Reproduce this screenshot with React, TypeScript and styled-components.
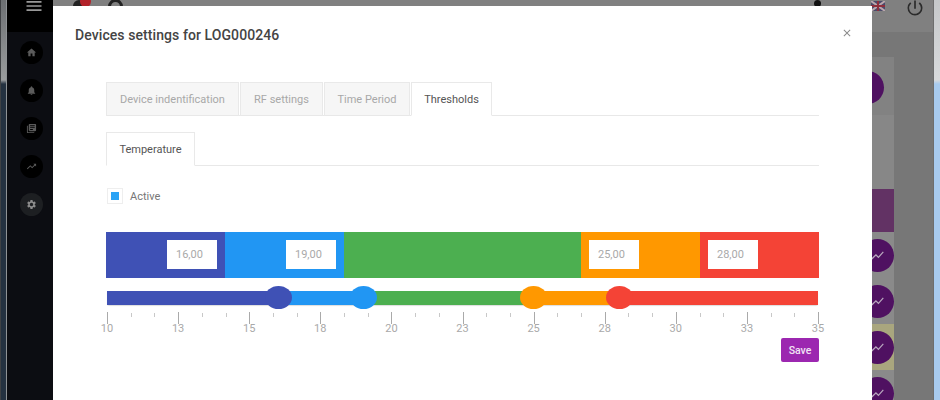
import React from "react";
import styled, { createGlobalStyle } from "styled-components";
import { MdHome, MdNotifications, MdLibraryBooks, MdSettings, MdTrendingUp, MdMenu, MdPowerSettingsNew, MdShowChart, MdClose } from "react-icons/md";

const Global = createGlobalStyle`
  html, body { margin: 0; padding: 0; width: 940px; height: 400px; overflow: hidden; background: #7f7f7f; }
  body { font-family: Roboto, "Liberation Sans", sans-serif; }
  * { box-sizing: border-box; }
`;

const Page = styled.div`
  position: relative;
  display: flex;
  width: 940px;
  height: 400px;
  overflow: hidden;
  background: #777;
`;
const WinEdgeLeft = styled.div`
  width: 7px;
  flex: none;
  background: linear-gradient(to bottom, #6c6f72 0, #9a9c9e 80px, #243140 84px, #243140 100%);
  border-left: 1px solid #3f4144;
  border-right: 1px solid #8f9295;
`;
const WinEdgeRight = styled.div`
  width: 7px;
  flex: none;
  background: linear-gradient(to bottom, #c6c8ca 0, #d8dadc 80px, #a8cbef 84px, #a8cbef 100%);
  border-left: 1px solid #6e6e6e;
`;
const Sidebar = styled.aside`
  width: 46px;
  flex: none;
  display: flex;
  flex-direction: column;
  background: #0c0d12;
`;
const Burger = styled.div`
  height: 32px;
  background: #000;
  color: #999;
  display: flex;
  justify-content: center;
  font-size: 20px;
  line-height: 0;
  padding-left: 7px;
  svg { margin-top: -4px; }
`;
const NavList = styled.nav`
  display: flex;
  flex-direction: column;
  gap: 15px;
  align-items: center;
  padding: 9px 0 0 3px;
`;
const NavDot = styled.span<{ $active?: boolean }>`
  width: 23px;
  height: 23px;
  border-radius: 50%;
  display: flex;
  align-items: center;
  justify-content: center;
  background: ${(p) => (p.$active ? "#1d1f22" : "#000")};
  color: ${(p) => (p.$active ? "#8c8c8c" : "#5b5b5b")};
  font-size: 11px;
`;
const Main = styled.div`
  flex: 1;
  display: flex;
  flex-direction: column;
`;
const TopBar = styled.div`
  height: 32px;
  background: #808080;
  flex: none;
`;
const Content = styled.div`
  flex: 1;
  display: flex;
  justify-content: flex-end;
  padding: 25px 39px 0 0;
`;
const RightCol = styled.div`
  width: 60px;
  display: flex;
  flex-direction: column;
  align-items: flex-end;
`;
const TopCell = styled.div`
  width: 60px;
  height: 58px;
  background: #828282;
  display: flex;
  justify-content: flex-end;
  padding: 14px 10px 0 0;
`;
const MiddleCell = styled.div`
  width: 60px;
  height: 74px;
  background: #878787;
`;
const PurpleBar = styled.div`
  width: 60px;
  height: 43px;
  background: #623264;
`;
const RoundRow = styled.div<{ $tint?: boolean }>`
  width: 60px;
  height: 46px;
  display: flex;
  justify-content: flex-end;
  align-items: center;
  background: ${(p) => (p.$tint ? "#a9a67e" : "#8a8a8a")};
`;
const RoundBtn = styled.span`
  width: 33px;
  height: 33px;
  flex: none;
  border-radius: 50%;
  background: #4f1161;
  color: #b9a9bf;
  display: flex;
  align-items: center;
  justify-content: center;
  font-size: 15px;
`;

const Overlay = styled.div`
  position: absolute;
  left: 0;
  top: 0;
  right: 0;
  bottom: 0;
  pointer-events: none;
`;
const Peek = styled.span<{ $x: number; $w: number; $bg: string; $top?: number }>`
  position: absolute;
  left: ${(p) => p.$x}px;
  top: ${(p) => p.$top ?? -4}px;
  width: ${(p) => p.$w}px;
  height: ${(p) => p.$w}px;
  border-radius: 50%;
  background: ${(p) => p.$bg};
`;
const HelpRing = styled(Peek)`
  background: transparent;
  border: 3px solid #222;
`;
const Flag = styled.svg`
  position: absolute;
  left: 871px;
  top: 1px;
  width: 14px;
  height: 10px;
`;
const Power = styled.span`
  position: absolute;
  left: 905px;
  top: -2px;
  color: #2b2b2b;
  font-size: 20px;
  line-height: 0;
`;

const Modal = styled.section`
  position: absolute;
  left: 53px;
  top: 6px;
  width: 819px;
  height: 400px;
  background: #fff;
  padding: 0 53px;
`;
const Title = styled.h2`
  margin: 0 0 0 -31px;
  padding-top: 21px;
  font-size: 14px;
  line-height: 17px;
  font-weight: 500;
  color: #444;
  letter-spacing: 0.08px;
`;
const Close = styled.span`
  position: absolute;
  right: 19px;
  top: 21px;
  color: #8a8a8a;
  font-size: 12px;
  line-height: 0;
`;
const TabRow = styled.div<{ $mt: number }>`
  display: flex;
  gap: 1px;
  margin-top: ${(p) => p.$mt}px;
  height: 34px;
  border-bottom: 1px solid #e8e8e8;
`;
const Tab = styled.div<{ $active?: boolean; $w: number }>`
  width: ${(p) => p.$w}px;
  height: 34px;
  display: flex;
  align-items: center;
  justify-content: center;
  font-size: 11px;
  white-space: nowrap;
  border: 1px solid #e9e9e9;
  background: ${(p) => (p.$active ? "#fff" : "#f6f6f6")};
  color: ${(p) => (p.$active ? "#555" : "#a8a8a8")};
  border-bottom-color: ${(p) => (p.$active ? "#fff" : "#e8e8e8")};
`;
const CheckRow = styled.label`
  display: flex;
  align-items: center;
  gap: 7px;
  margin: 22px 0 0 1px;
  height: 16px;
  font-size: 11px;
  color: #777;
`;
const Check = styled.span`
  width: 16px;
  height: 16px;
  background: #fff;
  border: 1px solid #eee;
  display: flex;
  align-items: center;
  justify-content: center;
  &::after {
    content: "";
    width: 8px;
    height: 8px;
    background: #2aa3f5;
  }
`;
const Bands = styled.div`
  display: flex;
  width: 713px;
  height: 46px;
  margin-top: 28px;
`;
const Band = styled.div<{ $w: number; $bg: string; $pad: number }>`
  width: ${(p) => p.$w}px;
  flex: none;
  background: ${(p) => p.$bg};
  padding: 8px 0 0 ${(p) => p.$pad}px;
`;
const ValueBox = styled.div`
  width: 50px;
  height: 29px;
  background: #fff;
  color: #a9a9a9;
  font-size: 11px;
  line-height: 29px;
  padding-left: 9px;
`;
const Slider = styled.div`
  position: relative;
  display: flex;
  width: 711px;
  height: 14px;
  margin: 13px 0 0 1px;
  border-radius: 2px;
  box-shadow: 0 1px 1px #ddd;
`;
const Seg = styled.div<{ $w: number; $bg: string }>`
  width: ${(p) => p.$w}px;
  height: 14px;
  flex: none;
  background: ${(p) => p.$bg};
`;
const Handle = styled.span<{ $x: number; $bg: string }>`
  position: absolute;
  left: ${(p) => p.$x}px;
  top: -5px;
  width: 27px;
  height: 23px;
  border-radius: 50%;
  background: ${(p) => p.$bg};
`;
const Ticks = styled.div`
  position: relative;
  width: 711px;
  height: 26px;
  margin: 7px 0 0 1px;
`;
const Tick = styled.span<{ $x: number; $major: boolean }>`
  position: absolute;
  left: ${(p) => p.$x}px;
  top: ${(p) => (p.$major ? 0 : 1)}px;
  width: 1px;
  height: ${(p) => (p.$major ? 12 : 4)}px;
  background: ${(p) => (p.$major ? "#aaa" : "#c8c8c8")};
`;
const TickLabel = styled.span<{ $x: number }>`
  position: absolute;
  left: ${(p) => p.$x}px;
  top: 10px;
  width: 24px;
  margin-left: -12px;
  text-align: center;
  color: #a9a9a9;
  font-size: 11px;
  line-height: 13px;
`;
const Footer = styled.div`
  display: flex;
  justify-content: flex-end;
  width: 713px;
`;
const Save = styled.button`
  width: 38px;
  height: 24px;
  padding: 0;
  border: 0;
  border-radius: 2px;
  background: #9c27b0;
  color: #f1e4f4;
  font: 500 10.5px Roboto, "Liberation Sans", sans-serif;
`;

const labels = [10, 13, 15, 18, 20, 23, 25, 28, 30, 33, 35];
const tickPositions = Array.from({ length: 31 }, (_, i) => i);

export default function App() {
  return (
    <Page>
      <Global />
      <WinEdgeLeft />
      <Sidebar>
        <Burger><MdMenu /></Burger>
        <NavList>
          <NavDot><MdHome /></NavDot>
          <NavDot><MdNotifications /></NavDot>
          <NavDot><MdLibraryBooks /></NavDot>
          <NavDot><MdTrendingUp /></NavDot>
          <NavDot $active><MdSettings /></NavDot>
        </NavList>
      </Sidebar>
      <Main>
        <TopBar />
        <Content>
          <RightCol>
            <TopCell><RoundBtn /></TopCell>
            <MiddleCell />
            <PurpleBar />
            <RoundRow><RoundBtn><MdShowChart /></RoundBtn></RoundRow>
            <RoundRow><RoundBtn><MdShowChart /></RoundBtn></RoundRow>
            <RoundRow $tint><RoundBtn><MdShowChart /></RoundBtn></RoundRow>
            <RoundRow><RoundBtn><MdShowChart /></RoundBtn></RoundRow>
          </RightCol>
        </Content>
      </Main>
      <WinEdgeRight />
      <Overlay>
        <Peek $x={73} $w={12} $bg="#222" $top={0} />
        <Peek $x={80} $w={11} $bg="#b2222a" />
        <HelpRing $x={108} $w={15} $bg="transparent" $top={-1} />
        <Peek $x={814} $w={7} $bg="#111" $top={0} />
        <Flag viewBox="0 0 14 10">
          <rect width="14" height="10" fill="#4b4a6a" />
          <path d="M0 0L14 10M14 0L0 10" stroke="#b9a6ac" strokeWidth="2" />
          <path d="M7 0V10M0 5H14" stroke="#8e2e3c" strokeWidth="2" />
        </Flag>
        <Power><MdPowerSettingsNew /></Power>
        <Modal>
          <Title>Devices settings for LOG000246</Title>
          <Close><MdClose /></Close>
          <TabRow $mt={38}>
            <Tab $w={133}>Device indentification</Tab>
            <Tab $w={83}>RF settings</Tab>
            <Tab $w={86}>Time Period</Tab>
            <Tab $w={81} $active>Thresholds</Tab>
          </TabRow>
          <TabRow $mt={16}>
            <Tab $w={89} $active>Temperature</Tab>
          </TabRow>
          <CheckRow><Check />Active</CheckRow>
          <Bands>
            <Band $w={119} $bg="#3f51b5" $pad={61}><ValueBox>16,00</ValueBox></Band>
            <Band $w={119} $bg="#2196f3" $pad={61}><ValueBox>19,00</ValueBox></Band>
            <Band $w={237} $bg="#4caf50" $pad={0} />
            <Band $w={119} $bg="#ff9800" $pad={8}><ValueBox>25,00</ValueBox></Band>
            <Band $w={119} $bg="#f44336" $pad={8}><ValueBox>28,00</ValueBox></Band>
          </Bands>
          <Slider>
            <Seg $w={172} $bg="#3f51b5" />
            <Seg $w={85} $bg="#2196f3" />
            <Seg $w={171} $bg="#4caf50" />
            <Seg $w={85} $bg="#ff9800" />
            <Seg $w={198} $bg="#f44336" />
            <Handle $x={158} $bg="#3f51b5" />
            <Handle $x={243} $bg="#2196f3" />
            <Handle $x={413} $bg="#ff9800" />
            <Handle $x={499} $bg="#f44336" />
          </Slider>
          <Ticks>
            {tickPositions.map((i) => (
              <Tick key={i} $x={i * 23.7} $major={i % 3 === 0} />
            ))}
            {labels.map((l, i) => (
              <TickLabel key={l} $x={i * 71.1}>{l}</TickLabel>
            ))}
          </Ticks>
          <Footer><Save>Save</Save></Footer>
        </Modal>
      </Overlay>
    </Page>
  );
}
